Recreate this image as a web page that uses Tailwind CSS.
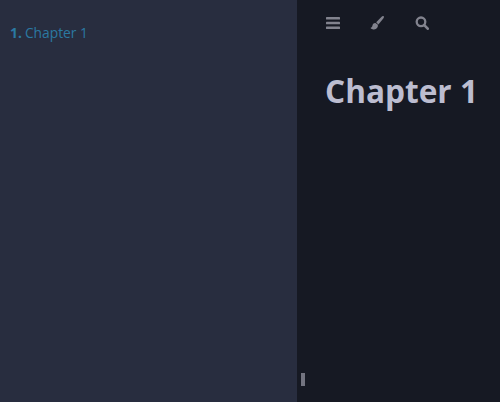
<!DOCTYPE html>
<html>
<head>
<meta charset="utf-8">
<script src="https://cdn.jsdelivr.net/npm/@tailwindcss/browser@4"></script>
</head>
<body class="m-0 overflow-hidden bg-[#161923] font-['Open_Sans',sans-serif]">
<div class="flex h-[402px] w-[500px] overflow-hidden">
  <aside class="w-[297px] shrink-0 bg-[#282d3f] pl-[10px] pt-[23px] text-[13.8px] leading-[19px] text-[#2b79a2]">
    <div><strong class="font-bold">1.</strong> <span class="-ml-[0.5px]">Chapter 1</span></div>
  </aside>
  <main class="relative flex-1 bg-[#161923]">
    <div class="absolute left-[4px] top-[373px] h-[13px] w-[4px] bg-[#737480]"></div>
    <div class="flex h-[46px] items-center">
      <svg class="ml-[29px] h-[16px] w-[14px]" viewBox="0 0 14 16" fill="#82838e"><rect x="0" y="2" width="14" height="2.6" rx=".6"/><rect x="0" y="6.700" width="14" height="2.6" rx=".6"/><rect x="0" y="11.400" width="14" height="2.6" rx=".6"/></svg>
      <svg class="ml-[30px] h-[14px] w-[14px]" viewBox="0 0 14 14" fill="#82838e"><path d="M13.700.3c-.6-.4-1.500-.2-2.100.5L6.200 6.300l2.200 2.200 4.900-5.900c.6-.7.900-1.700.4-2.300z"/><path d="M5.400 7C3.500 7.100 2.600 8.300 2.400 9.800 2.200 11.100 1.400 11.700.5 11.900c1.200 1.400 3.600 2 5.400 1.100 1.700-.9 2.400-2.900 1.800-4.400z"/></svg>
      <svg class="ml-[31px] h-[14px] w-[14px]" viewBox="0 0 14 14" fill="none" stroke="#82838e"><circle cx="6" cy="5.800" r="4.300" stroke-width="2.300"/><path d="M9.500 9.300l3.200 3.400" stroke-width="2.600" stroke-linecap="round"/></svg>
    </div>
    <h1 class="ml-[28px] mt-[25px] text-[31.6px] font-bold leading-[40px] text-[#bcbdd0]">Chapter 1</h1>
  </main>
</div>
</body>
</html>
